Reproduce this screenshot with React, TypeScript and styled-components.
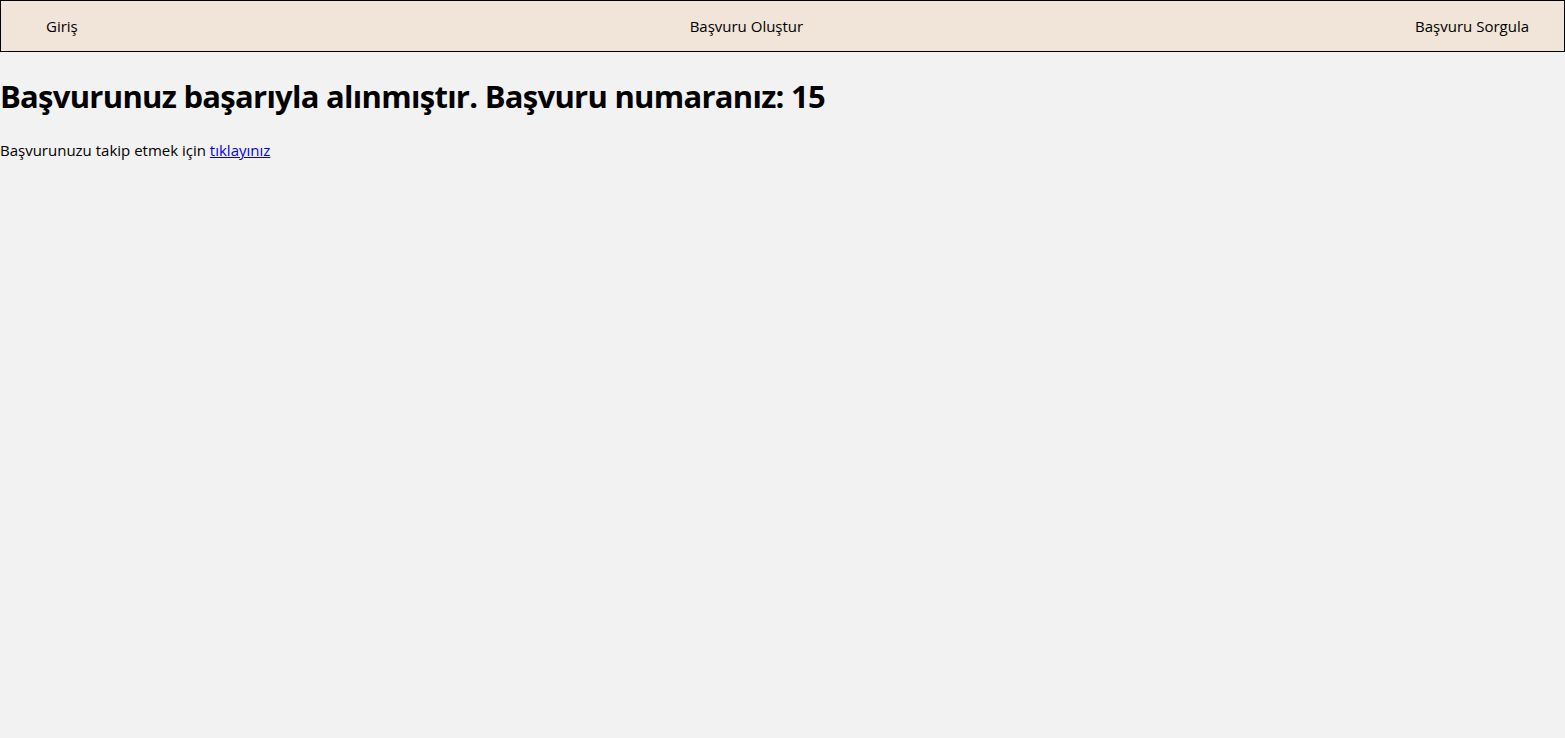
import React from "react";
import styled, { createGlobalStyle } from "styled-components";

const Global = createGlobalStyle`
  html, body { margin: 0; padding: 0; background: #f2f2f2; }
  body { font-family: "Open Sans", "Noto Sans", sans-serif; color: #000; }
`;

const Nav = styled.nav`
  background: #f1e4d8;
  border: 1px solid #000;
  height: 50px;
  display: flex;
  align-items: center;
  justify-content: space-between;
  padding: 0 35px 0 45px;
`;

const NavLink = styled.a`
  font-size: 15px;
  color: #000;
  text-decoration: none;
  cursor: pointer;
`;

const Heading = styled.h1`
  font-size: 31px;
  font-weight: 700;
  margin: 23px 0 23px;
  letter-spacing: -0.72px;
`;

const Text = styled.p`
  font-size: 15px;
  margin: 0;
`;

const Link = styled.a`
  color: #0000ee;
  text-decoration: underline;
`;

export default function App() {
  return (
    <>
      <Global />
      <Nav>
        <NavLink>Giriş</NavLink>
        <NavLink>Başvuru Oluştur</NavLink>
        <NavLink>Başvuru Sorgula</NavLink>
      </Nav>
      <Heading>Başvurunuz başarıyla alınmıştır. Başvuru numaranız: 15</Heading>
      <Text>
        Başvurunuzu takip etmek için <Link href="#">tıklayınız</Link>
      </Text>
    </>
  );
}
